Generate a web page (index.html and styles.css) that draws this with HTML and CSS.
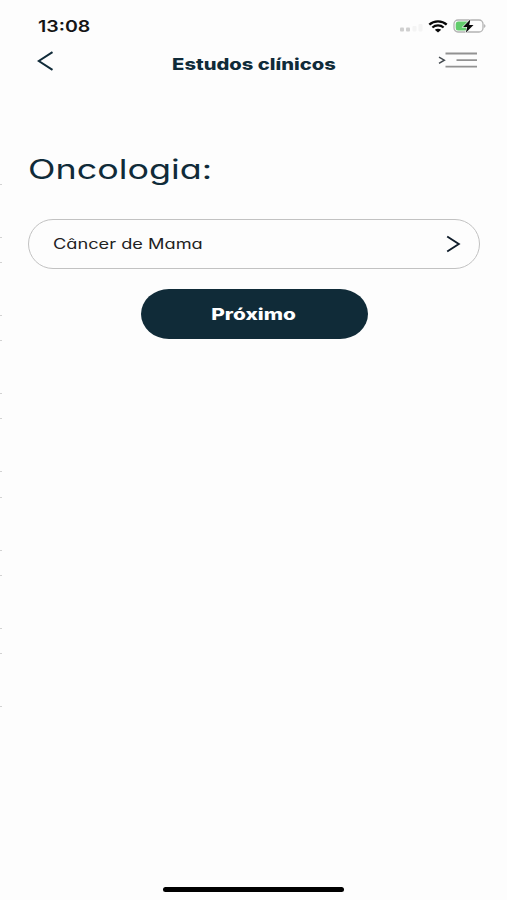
FILE: index.html
```
<!DOCTYPE html>
<html lang="pt-BR">
<head>
  <meta charset="UTF-8">
  <meta name="viewport" content="width=device-width, initial-scale=1">
  <title>Estudos clínicos</title>
  <link rel="stylesheet" href="styles.css">
</head>
<body>

  <div class="tela">
    <div class="status">
      <span class="hora">13:08</span>
      <div class="status-icones">
        <svg class="sinal" width="25" height="10" viewBox="0 0 25 10">
          <rect x="1" y="5.500" width="4" height="4" rx="1" fill="#cfcfcf"/>
          <rect x="7" y="5.500" width="4" height="4" rx="1" fill="#cfcfcf"/>
          <rect x="13.500" y="4" width="4" height="5.500" rx="1" fill="#f4f4f4"/>
          <rect x="19.500" y="2" width="4" height="7.500" rx="1" fill="#f4f4f4"/>
        </svg>
        <svg class="wifi" width="20" height="13" viewBox="0 0 20 13">
          <path d="M1.300 4.600C6 0.300 14 0.300 18.700 4.600" fill="none" stroke="#080808" stroke-width="2.300"/>
          <path d="M4.400 7.500C7.500 4.700 12.500 4.700 15.600 7.500" fill="none" stroke="#080808" stroke-width="2.200"/>
          <path d="M6.800 9.800C8.600 8.300 11.400 8.300 13.200 9.800L10 12.400Z" fill="#080808"/>
        </svg>
        <svg class="bateria" width="34" height="16" viewBox="0 0 34 16">
          <rect x="1" y="2" width="29" height="12" rx="4" fill="#fdfdfd" stroke="#b3b3b3" stroke-width="1.300"/>
          <path d="M5 3.500H16V12.500H5Q2.700 12.500 2.700 10V6Q2.700 3.500 5 3.500Z" fill="#62cd6c"/>
          <path d="M31.300 6Q33.500 8 31.300 10Z" fill="#999"/>
          <path d="M17.500 1.300L10 9H14.200L12.800 14.700L20.500 7H16.200Z" fill="#080808" stroke="#fdfdfd" stroke-width="1.200" paint-order="stroke"/>
        </svg>
      </div>
    </div>

    <header>
      <button class="voltar" aria-label="Voltar">
        <svg width="17" height="20" viewBox="0 0 17 20">
          <path d="M15.500 1.200L1.800 10L15.500 18.800" fill="none" stroke="#102b39" stroke-width="2"/>
        </svg>
      </button>
      <h1><span class="texto">Estudos clínicos</span></h1>
      <button class="menu" aria-label="Menu">
        <svg width="40" height="18" viewBox="0 0 40 18">
          <path d="M1 6.200L6.300 9.200L1 12.300" fill="none" stroke="#454b50" stroke-width="1.500"/>
          <path d="M7.500 2.500H39M18.500 9.200H39M7.500 15.700H39" stroke="#929292" stroke-width="1.800"/>
        </svg>
      </button>
    </header>

    <main>
      <h2><span class="texto">Oncologia:</span></h2>
      <button class="opcao">
        <span class="texto">Câncer de Mama</span>
        <svg width="15" height="18" viewBox="0 0 15 18">
          <path d="M1.200 1.500L12.800 9L1.200 16.500" fill="none" stroke="#101d2b" stroke-width="1.900"/>
        </svg>
      </button>
      <button class="proximo"><span class="texto">Próximo</span></button>
    </main>

    <div class="barra-inicio"></div>

    <!-- lista da tela anterior, ainda visível na borda -->
    <div class="lista-anterior">
      <div class="item"></div>
      <div class="item"></div>
      <div class="item"></div>
      <div class="item"></div>
      <div class="item"></div>
      <div class="item"></div>
      <div class="item"></div>
    </div>
  </div>

</body>
</html>
```
FILE: styles.css
```
* {
  box-sizing: border-box;
}
body {
  margin: 0;
  background: #fdfdfd;
  color: #102b39;
  font-family: Inter, "Open Sans", sans-serif;
  font-feature-settings: "cv11";
}
button {
  padding: 0;
  border: none;
  background: none;
  font: inherit;
  font-feature-settings: inherit;
  cursor: pointer;
}
svg {
  display: block;
}
.tela {
  position: relative;
  height: 900px;
  overflow: hidden;
  display: flex;
  flex-direction: column;
}
.texto,
.hora {
  display: inline-block;
  white-space: nowrap;
}

.status {
  display: flex;
  justify-content: space-between;
  align-items: center;
  height: 36px;
  padding: 16px 20px 0 38px;
}
.hora {
  color: #151515;
  font-size: 16px;
  font-weight: 600;
  line-height: 20px;
  transform: scaleX(1.22);
  transform-origin: left;
}
.status-icones {
  display: flex;
  align-items: center;
}
.sinal {
  margin: 2px 4px 0 0;
}
.wifi {
  margin-right: 5px;
}

header {
  display: grid;
  grid-template-columns: 60px 1fr 60px;
  align-items: center;
  height: 50px;
  padding: 0 29px;
}
.voltar {
  justify-self: start;
  padding-left: 8px;
}
.menu {
  justify-self: end;
  margin-bottom: 2px;
}
h1 {
  margin: 5px 0 0;
  font-size: 16px;
  font-weight: 800;
  line-height: 22px;
  text-align: center;
}
h1 .texto {
  transform: scaleX(1.26);
}

main {
  flex: 1;
  padding: 64px 27px 0 28px;
}
h2 {
  margin: 0 0 29px;
  font-size: 27px;
  font-weight: 400;
  line-height: 40px;
}
h2 .texto {
  transform: scaleX(1.33);
  transform-origin: left;
}
.opcao {
  display: flex;
  justify-content: space-between;
  align-items: center;
  width: 100%;
  height: 50px;
  padding: 0 18px 0 24px;
  border: 1px solid #c2c2c2;
  border-radius: 25px;
  color: #222;
  font-size: 14px;
}
.opcao .texto {
  margin-top: -1px;
  transform: scaleX(1.3);
  transform-origin: left;
}
.proximo {
  display: block;
  width: 227px;
  height: 50px;
  margin: 20px auto 0;
  border-radius: 28px / 25px;
  background: #102b38;
  color: #fff;
  font-size: 16px;
  font-weight: 800;
}
.proximo .texto {
  transform: scaleX(1.3);
}

.barra-inicio {
  width: 181px;
  height: 5px;
  margin: 0 auto 8px;
  border-radius: 3px;
  background: #000;
}

.lista-anterior {
  position: absolute;
  top: 183.500px;
  left: 0;
  width: 2px;
  display: grid;
  gap: 24.300px;
}
.item {
  height: 54px;
  border: solid #d2d2d2;
  border-width: 1px 0;
}
```
